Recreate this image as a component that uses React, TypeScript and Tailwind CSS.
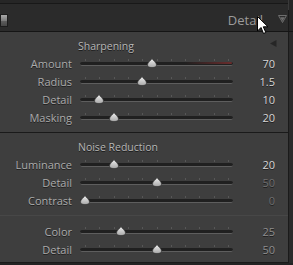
type Row = { label: string; value: string; pos: number; tone: "bright" | "dim" | "mid"; red?: boolean };

const sharpening: Row[] = [
  { label: "Amount", value: "70", pos: 70 / 150, tone: "bright", red: true },
  { label: "Radius", value: "1.5", pos: 0.4, tone: "bright" },
  { label: "Detail", value: "10", pos: 0.1, tone: "bright" },
  { label: "Masking", value: "20", pos: 0.2, tone: "bright" },
];

const noise: Row[] = [
  { label: "Luminance", value: "20", pos: 0.2, tone: "bright" },
  { label: "Detail", value: "50", pos: 0.5, tone: "dim" },
  { label: "Contrast", value: "0", pos: 0, tone: "dim" },
];

const color: Row[] = [
  { label: "Color", value: "25", pos: 0.25, tone: "mid" },
  { label: "Detail", value: "50", pos: 0.5, tone: "mid" },
];

const valueTone = {
  bright: "text-[#d6d6d6]",
  mid: "text-[#8e8e8e]",
  dim: "text-[#6f6f6f]",
};

function Thumb({ pos }: { pos: number }) {
  return (
    <svg
      width="10"
      height="10"
      viewBox="0 0 10 10"
      className="absolute top-[4px]"
      style={{ left: 5 + pos * 143 - 5 }}
    >
      <defs>
        <linearGradient id="th" x1="0" y1="0" x2="0" y2="1">
          <stop offset="0" stopColor="#f0f0f0" />
          <stop offset="1" stopColor="#a8a8a8" />
        </linearGradient>
      </defs>
      <path d="M5 0.5 C6 2.5 9.5 4.5 9.5 7 C9.5 8.8 7.5 9.5 5 9.5 C2.5 9.5 0.5 8.8 0.5 7 C0.5 4.5 4 2.5 5 0.5 Z" fill="url(#th)" stroke="#2a2a2a" strokeWidth="0.6" />
    </svg>
  );
}

function Slider({ row }: { row: Row }) {
  return (
    <div className="flex h-[18px] items-center">
      <div className="w-[72px] text-right text-[11px] leading-none text-[#ababab] [text-shadow:0_1px_0_rgba(0,0,0,0.55)]">
        {row.label}
      </div>
      <div className="relative ml-[8px] h-[18px] w-[153px]">
        {Array.from({ length: 11 }).map((_, i) => (
          <div
            key={i}
            className="absolute top-[5px] h-[2px] w-px bg-[#575757]"
            style={{ left: 5 + i * 14.3 }}
          />
        ))}
        <div className="absolute left-0 right-0 top-[8px] h-[4px] rounded-full border-b border-[#5e5e5e] bg-[#202020]" />
        {row.red && (
          <div className="absolute left-[105px] right-[1px] top-[8px] h-[2px] rounded-r-full bg-gradient-to-r from-transparent to-[#6a2c2c]" />
        )}
        <Thumb pos={row.pos} />
      </div>
      <div
        className={`w-[42px] text-right text-[11px] leading-none [text-shadow:0_1px_0_rgba(0,0,0,0.55)] ${valueTone[row.tone]}`}
      >
        {row.value}
      </div>
    </div>
  );
}

function SectionTitle({ title }: { title: string }) {
  return (
    <div className="flex h-[16px] items-center pl-[78px] text-[10.5px] leading-none text-[#b6b6b6] [text-shadow:0_1px_0_rgba(0,0,0,0.6)]">
      {title}
    </div>
  );
}

export default function App() {
  return (
    <div
      className="relative h-[265px] w-[293px] overflow-hidden bg-[#232323]"
      style={{ fontFamily: '"Open Sans", "Liberation Sans", sans-serif' }}
    >
      {/* top strip */}
      <div className="flex h-[10px]">
        <div className="flex w-[288px] flex-col">
          <div className="h-[3px] bg-[#262626]" />
          <div className="h-[7px] border-t border-[#181818] bg-[#2a2a2a]" />
        </div>
        <div className="w-[5px] border-l border-[#3a3a3a] bg-[#262626]" />
      </div>

      {/* header */}
      <div className="relative flex h-[22px] items-center border-b border-[#151515] bg-[#2b2b2b]">
        <div className="flex h-[13px] w-[8px] flex-col border border-[#1c1c1c]">
          <div className="flex-1 bg-gradient-to-b from-[#a8a8a8] to-[#7a7a7a]" />
          <div className="flex-1 bg-gradient-to-b from-[#5e5e5e] to-[#474747]" />
        </div>
        <div className="ml-auto mr-[30px] text-[13px] leading-none text-[#9b9b9b]">Detail</div>
        <svg width="9" height="8" viewBox="0 0 9 8" className="absolute left-[278px] top-[5px]">
          <path d="M0.5 0.5 H8.5 L4.5 7.5 Z" fill="none" stroke="#6e6e6e" strokeWidth="1" />
          <path d="M2.2 2.3 H6.8 L4.5 6 Z" fill="#6e6e6e" />
        </svg>
        <div className="absolute right-0 top-0 h-full w-[5px] border-l border-[#1a1a1a] bg-[#262626]" />
      </div>

      {/* panel */}
      <div className="flex">
        <div className="relative w-[288px] bg-[#3e3e3e]">
          <svg width="7" height="7" viewBox="0 0 7 7" className="absolute left-[270px] top-[8px]">
            <path d="M6.5 0 V7 L0 3.5 Z" fill="#262626" />
          </svg>
          <div className="pt-[6px]">
            <SectionTitle title="Sharpening" />
            {sharpening.map((r) => (
              <Slider key={r.label} row={r} />
            ))}
          </div>
          <div className="mt-[6px] h-px bg-[#1a1a1a]" />
          <div className="pt-[6px]">
            <SectionTitle title="Noise Reduction" />
            {noise.map((r) => (
              <Slider key={r.label} row={r} />
            ))}
          </div>
          <div className="mt-[6px] h-px bg-[#474747]" />
          <div className="pb-[4px] pt-[6px]">
            {color.map((r) => (
              <Slider key={r.label} row={r} />
            ))}
          </div>
          <div className="h-px bg-[#1a1a1a]" />
        </div>
        <div className="w-[5px] border-l border-[#1a1a1a] bg-[#2a2a2a]" />
      </div>

      {/* cursor */}
      <svg width="12" height="19" viewBox="0 0 12 19" className="absolute left-[257px] top-[16px]">
        <path d="M0.5 0.5 V15 L4 11.5 L6.5 17.5 L8.8 16.5 L6.3 10.8 H11 Z" fill="#ffffff" stroke="#000000" strokeWidth="1" strokeLinejoin="round" />
      </svg>
    </div>
  );
}
